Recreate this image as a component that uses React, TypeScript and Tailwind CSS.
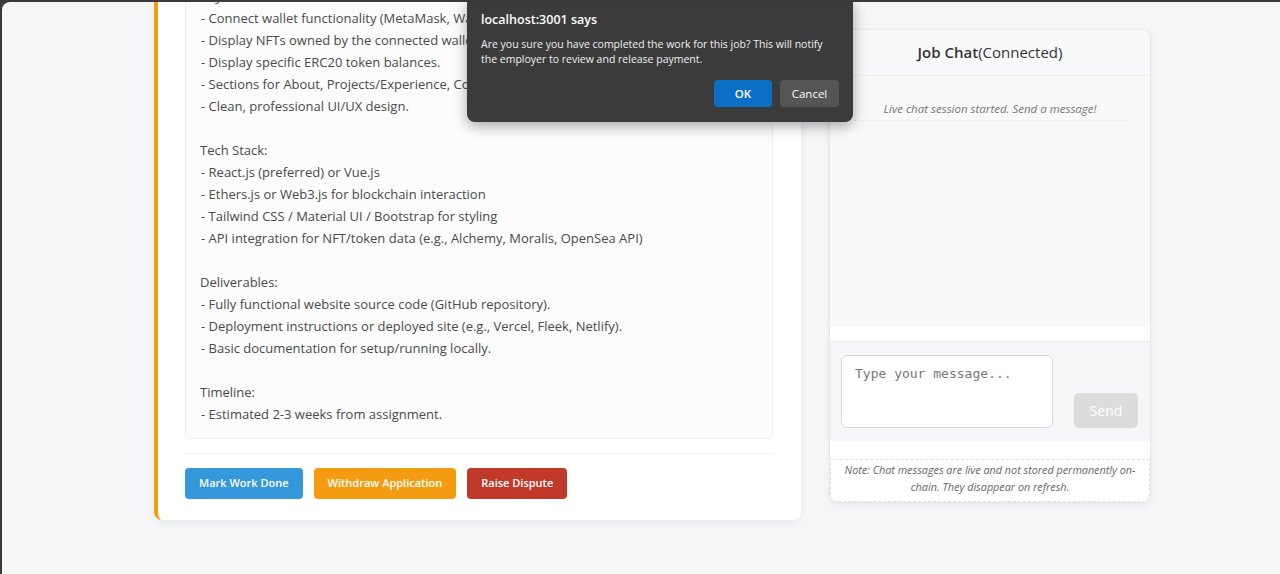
import React from 'react';

// ─── Content ────────────────────────────────────────────────────────────────

const descriptionLines: string[] = [
  'Key Features:',
  '- Connect wallet functionality (MetaMask, WalletConnect).',
  '- Display NFTs owned by the connected wallet.',
  '- Display specific ERC20 token balances.',
  '- Sections for About, Projects/Experience, Contact.',
  '- Clean, professional UI/UX design.',
  '',
  'Tech Stack:',
  '- React.js (preferred) or Vue.js',
  '- Ethers.js or Web3.js for blockchain interaction',
  '- Tailwind CSS / Material UI / Bootstrap for styling',
  '- API integration for NFT/token data (e.g., Alchemy, Moralis, OpenSea API)',
  '',
  'Deliverables:',
  '- Fully functional website source code (GitHub repository).',
  '- Deployment instructions or deployed site (e.g., Vercel, Fleek, Netlify).',
  '- Basic documentation for setup/running locally.',
  '',
  'Timeline:',
  '- Estimated 2-3 weeks from assignment.',
];

const FONT = "font-['Segoe_UI','Open_Sans','Noto_Sans',sans-serif]";

// ─── Job Card ───────────────────────────────────────────────────────────────

function JobCard() {
  return (
    <div className="w-[647px] -mt-[21px] bg-white rounded-lg border-l-4 border-[#f39c12] shadow-[0_2px_8px_rgba(0,0,0,0.06)] pl-[27px] pr-[28px] pb-[21px]">
      <div className="bg-[#fcfcfc] border border-[#eeeeee] rounded pl-[14px] pr-[14px] pt-[3px] pb-[13px] text-[13px] leading-[22px] text-[#4a4a4a]">
        {descriptionLines.map((line, i) => (
          <div key={i} className={`h-[22px] whitespace-nowrap ${line.startsWith('-') ? 'pl-[1px]' : ''}`}>
            {line}
          </div>
        ))}
      </div>

      <div className="mt-[14px] border-t border-[#f0f0f0] pt-[14px] flex gap-[11px]">
        <button className="h-[31px] px-[14px] rounded bg-[#3498db] text-white text-[11px] font-semibold">
          Mark Work Done
        </button>
        <button className="h-[31px] px-[14px] rounded bg-[#f39c12] text-white text-[11px] font-semibold">
          Withdraw Application
        </button>
        <button className="h-[31px] px-[14px] rounded bg-[#c0392b] text-white text-[11px] font-semibold">
          Raise Dispute
        </button>
      </div>
    </div>
  );
}

// ─── Chat Panel ─────────────────────────────────────────────────────────────

function ChatPanel() {
  return (
    <div className="w-[322px] mt-[27px] bg-white border border-[#e6e6e6] rounded-lg shadow-[0_2px_6px_rgba(0,0,0,0.06)] flex flex-col overflow-hidden">
      {/* Header */}
      <div className="h-[46px] flex items-center justify-center bg-[#f8f9fa] border-b border-[#ececec] text-[15px] text-[#333]">
        <span className="font-semibold">Job Chat</span>
        <span>(Connected)</span>
      </div>

      {/* Messages */}
      <div className="h-[251px] bg-[#f9f9f9] px-[24px] pt-[24px]">
        <div className="pb-[3px] border-b border-dotted border-[#e3e3e3] text-center italic text-[11.5px] text-[#777]">
          Live chat session started. Send a message!
        </div>
      </div>

      <div className="h-[14px] bg-white" />

      {/* Input */}
      <div className="h-[100px] bg-[#f5f6f7] border-t border-[#eaeaea] px-[11px] pt-[13px] flex items-start gap-[21px]">
        <textarea
          placeholder="Type your message..."
          className="w-[212px] h-[73px] resize-none rounded-md border border-[#d6d6d6] bg-white px-[13px] py-[8px] text-[13px] font-['DejaVu_Sans_Mono',monospace] placeholder:text-[#777] outline-none"
        />
        <button className="mt-[38px] w-[64px] h-[35px] rounded-[5px] bg-[#dcdcdc] text-white text-[14px]">
          Send
        </button>
      </div>

      {/* Note */}
      <div className="bg-white pt-[18px]">
        <div className="border border-dashed border-[#e0e0e0] rounded-b-lg px-[6px] pt-[1px] pb-[6px] text-center italic text-[10.8px] leading-[17px] text-[#666]">
          Note: Chat messages are live and not stored permanently on-
          <br />
          chain. They disappear on refresh.
        </div>
      </div>
    </div>
  );
}

// ─── Confirm Dialog (browser alert) ─────────────────────────────────────────

function ConfirmDialog() {
  return (
    <div className="absolute left-[465px] -top-[2px] w-[386px] h-[122px] bg-[#3b3b3b] rounded-b-lg shadow-[0_4px_14px_rgba(0,0,0,0.35)] px-[14px] pt-[11px] text-white">
      <div className="text-[12.5px] font-semibold">localhost:3001 says</div>
      <div className="mt-[7px] text-[10.5px] leading-[15px] text-[#f0f0f0] whitespace-nowrap">
        Are you sure you have completed the work for this job? This will notify
        <br />
        the employer to review and release payment.
      </div>
      <div className="mt-[13px] flex justify-end gap-[8px]">
        <button className="w-[58px] h-[27px] rounded bg-[#0b6fc6] text-[11.5px] font-semibold">OK</button>
        <button className="w-[59px] h-[27px] rounded bg-[#555555] text-[11.5px]">Cancel</button>
      </div>
    </div>
  );
}

// ─── Page ───────────────────────────────────────────────────────────────────

export default function App() {
  return (
    <div className={`w-[1280px] h-[574px] bg-[#3a3a3a] pt-[2px] pl-[2px] overflow-hidden ${FONT}`}>
      <div className="relative h-full bg-[#f5f6f8] rounded-tl-lg overflow-hidden">
        <div className="flex items-start gap-[28px] pl-[152px]">
          <JobCard />
          <ChatPanel />
        </div>
        <ConfirmDialog />
      </div>
    </div>
  );
}
